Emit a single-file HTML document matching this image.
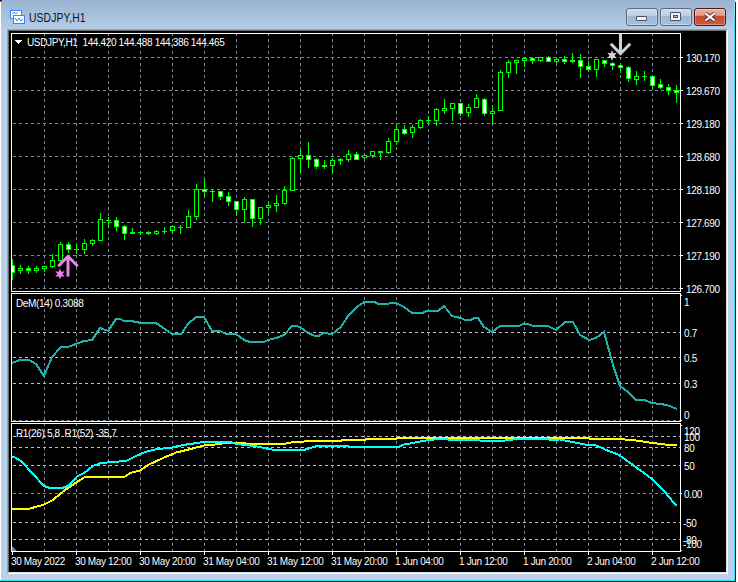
<!DOCTYPE html>
<html><head><meta charset="utf-8">
<style>
html,body{margin:0;padding:0;}
body{width:738px;height:582px;position:relative;overflow:hidden;background:#fff;font-family:"Liberation Sans",sans-serif;}
.frame{position:absolute;left:1px;top:0;width:734px;height:580px;background:#b9d1ea;}
.title{position:absolute;left:1px;top:0;width:734px;height:29px;background:linear-gradient(#99b3d0,#b5cde6);}
.cyanr{position:absolute;left:734px;top:2px;width:1px;height:578px;background:#40d8f8;}
.darkr{position:absolute;left:735px;top:2px;width:1px;height:580px;background:#1a1a1a;}
.cyanb{position:absolute;left:0;top:580px;width:735px;height:1px;background:#40d8f8;}
.darkb{position:absolute;left:0;top:581px;width:736px;height:1px;background:#1a1a1a;}
.sunk{position:absolute;left:7px;top:29px;width:721px;height:545px;box-sizing:border-box;border-top:1px solid #a0a0a0;border-left:1px solid #a0a0a0;border-right:1px solid #fff;border-bottom:1px solid #fff;}
.sunk2{position:absolute;left:8px;top:30px;width:719px;height:543px;box-sizing:border-box;border-top:1px solid #696969;border-left:1px solid #696969;border-right:1px solid #e3e3e3;border-bottom:1px solid #e3e3e3;}
svg{position:absolute;left:0;top:0;}
.t{position:absolute;white-space:nowrap;line-height:12px;}
.ttl{position:absolute;left:29px;top:9px;font-size:12px;color:#0c1428;line-height:18px;letter-spacing:0.15px;transform:scaleX(0.86);transform-origin:0 0;}
.btn{position:absolute;top:8px;height:18px;box-sizing:border-box;border:1px solid #5a6880;border-radius:3px;background:linear-gradient(#cadbef 0%,#bed1e8 40%,#9db7d4 44%,#a8c1dc 100%);box-shadow:inset 0 0 0 1px rgba(255,255,255,0.3);}
.cls{border-color:#4a1420;background:linear-gradient(#ecb2a2 0%,#e09a88 40%,#c24a30 44%,#cc5c40 100%);}
</style></head><body>
<div class="frame"></div>
<div class="title"></div>
<div class="cyanr"></div><div class="darkr"></div>
<div class="cyanb"></div><div class="darkb"></div>
<div style="position:absolute;left:0;top:0;width:2px;height:1px;background:#222"></div><div style="position:absolute;left:0;top:1px;width:1px;height:1px;background:#555"></div>
<div style="position:absolute;left:734px;top:2px;width:1px;height:24px;background:linear-gradient(#a0e6f6,#40d8f8)"></div>
<div class="sunk"></div><div class="sunk2"></div>
<svg width="738" height="582" viewBox="0 0 738 582">
<defs>
<clipPath id="mainclip"><rect x="12" y="34" width="668" height="257"/></clipPath>
<clipPath id="p2clip"><rect x="12" y="294" width="668" height="127"/></clipPath>
<clipPath id="p3clip"><rect x="12" y="424" width="668" height="127"/></clipPath>
</defs>
<rect x="9" y="31" width="717" height="541" fill="#000"/>
<g shape-rendering="crispEdges">
<line x1="44.5" y1="34" x2="44.5" y2="291" stroke="#778899" stroke-dasharray="3 3" stroke-dashoffset="1"/>
<line x1="76.5" y1="34" x2="76.5" y2="291" stroke="#778899" stroke-dasharray="3 3" stroke-dashoffset="1"/>
<line x1="108.5" y1="34" x2="108.5" y2="291" stroke="#778899" stroke-dasharray="3 3" stroke-dashoffset="1"/>
<line x1="140.5" y1="34" x2="140.5" y2="291" stroke="#778899" stroke-dasharray="3 3" stroke-dashoffset="1"/>
<line x1="172.5" y1="34" x2="172.5" y2="291" stroke="#778899" stroke-dasharray="3 3" stroke-dashoffset="1"/>
<line x1="204.5" y1="34" x2="204.5" y2="291" stroke="#778899" stroke-dasharray="3 3" stroke-dashoffset="1"/>
<line x1="236.5" y1="34" x2="236.5" y2="291" stroke="#778899" stroke-dasharray="3 3" stroke-dashoffset="1"/>
<line x1="268.5" y1="34" x2="268.5" y2="291" stroke="#778899" stroke-dasharray="3 3" stroke-dashoffset="1"/>
<line x1="300.5" y1="34" x2="300.5" y2="291" stroke="#778899" stroke-dasharray="3 3" stroke-dashoffset="1"/>
<line x1="332.5" y1="34" x2="332.5" y2="291" stroke="#778899" stroke-dasharray="3 3" stroke-dashoffset="1"/>
<line x1="364.5" y1="34" x2="364.5" y2="291" stroke="#778899" stroke-dasharray="3 3" stroke-dashoffset="1"/>
<line x1="396.5" y1="34" x2="396.5" y2="291" stroke="#778899" stroke-dasharray="3 3" stroke-dashoffset="1"/>
<line x1="428.5" y1="34" x2="428.5" y2="291" stroke="#778899" stroke-dasharray="3 3" stroke-dashoffset="1"/>
<line x1="460.5" y1="34" x2="460.5" y2="291" stroke="#778899" stroke-dasharray="3 3" stroke-dashoffset="1"/>
<line x1="492.5" y1="34" x2="492.5" y2="291" stroke="#778899" stroke-dasharray="3 3" stroke-dashoffset="1"/>
<line x1="524.5" y1="34" x2="524.5" y2="291" stroke="#778899" stroke-dasharray="3 3" stroke-dashoffset="1"/>
<line x1="556.5" y1="34" x2="556.5" y2="291" stroke="#778899" stroke-dasharray="3 3" stroke-dashoffset="1"/>
<line x1="588.5" y1="34" x2="588.5" y2="291" stroke="#778899" stroke-dasharray="3 3" stroke-dashoffset="1"/>
<line x1="620.5" y1="34" x2="620.5" y2="291" stroke="#778899" stroke-dasharray="3 3" stroke-dashoffset="1"/>
<line x1="652.5" y1="34" x2="652.5" y2="291" stroke="#778899" stroke-dasharray="3 3" stroke-dashoffset="1"/>
<line x1="44.5" y1="294" x2="44.5" y2="421" stroke="#778899" stroke-dasharray="3 3" stroke-dashoffset="3"/>
<line x1="76.5" y1="294" x2="76.5" y2="421" stroke="#778899" stroke-dasharray="3 3" stroke-dashoffset="3"/>
<line x1="108.5" y1="294" x2="108.5" y2="421" stroke="#778899" stroke-dasharray="3 3" stroke-dashoffset="3"/>
<line x1="140.5" y1="294" x2="140.5" y2="421" stroke="#778899" stroke-dasharray="3 3" stroke-dashoffset="3"/>
<line x1="172.5" y1="294" x2="172.5" y2="421" stroke="#778899" stroke-dasharray="3 3" stroke-dashoffset="3"/>
<line x1="204.5" y1="294" x2="204.5" y2="421" stroke="#778899" stroke-dasharray="3 3" stroke-dashoffset="3"/>
<line x1="236.5" y1="294" x2="236.5" y2="421" stroke="#778899" stroke-dasharray="3 3" stroke-dashoffset="3"/>
<line x1="268.5" y1="294" x2="268.5" y2="421" stroke="#778899" stroke-dasharray="3 3" stroke-dashoffset="3"/>
<line x1="300.5" y1="294" x2="300.5" y2="421" stroke="#778899" stroke-dasharray="3 3" stroke-dashoffset="3"/>
<line x1="332.5" y1="294" x2="332.5" y2="421" stroke="#778899" stroke-dasharray="3 3" stroke-dashoffset="3"/>
<line x1="364.5" y1="294" x2="364.5" y2="421" stroke="#778899" stroke-dasharray="3 3" stroke-dashoffset="3"/>
<line x1="396.5" y1="294" x2="396.5" y2="421" stroke="#778899" stroke-dasharray="3 3" stroke-dashoffset="3"/>
<line x1="428.5" y1="294" x2="428.5" y2="421" stroke="#778899" stroke-dasharray="3 3" stroke-dashoffset="3"/>
<line x1="460.5" y1="294" x2="460.5" y2="421" stroke="#778899" stroke-dasharray="3 3" stroke-dashoffset="3"/>
<line x1="492.5" y1="294" x2="492.5" y2="421" stroke="#778899" stroke-dasharray="3 3" stroke-dashoffset="3"/>
<line x1="524.5" y1="294" x2="524.5" y2="421" stroke="#778899" stroke-dasharray="3 3" stroke-dashoffset="3"/>
<line x1="556.5" y1="294" x2="556.5" y2="421" stroke="#778899" stroke-dasharray="3 3" stroke-dashoffset="3"/>
<line x1="588.5" y1="294" x2="588.5" y2="421" stroke="#778899" stroke-dasharray="3 3" stroke-dashoffset="3"/>
<line x1="620.5" y1="294" x2="620.5" y2="421" stroke="#778899" stroke-dasharray="3 3" stroke-dashoffset="3"/>
<line x1="652.5" y1="294" x2="652.5" y2="421" stroke="#778899" stroke-dasharray="3 3" stroke-dashoffset="3"/>
<line x1="44.5" y1="424" x2="44.5" y2="551" stroke="#778899" stroke-dasharray="3 3" stroke-dashoffset="1"/>
<line x1="76.5" y1="424" x2="76.5" y2="551" stroke="#778899" stroke-dasharray="3 3" stroke-dashoffset="1"/>
<line x1="108.5" y1="424" x2="108.5" y2="551" stroke="#778899" stroke-dasharray="3 3" stroke-dashoffset="1"/>
<line x1="140.5" y1="424" x2="140.5" y2="551" stroke="#778899" stroke-dasharray="3 3" stroke-dashoffset="1"/>
<line x1="172.5" y1="424" x2="172.5" y2="551" stroke="#778899" stroke-dasharray="3 3" stroke-dashoffset="1"/>
<line x1="204.5" y1="424" x2="204.5" y2="551" stroke="#778899" stroke-dasharray="3 3" stroke-dashoffset="1"/>
<line x1="236.5" y1="424" x2="236.5" y2="551" stroke="#778899" stroke-dasharray="3 3" stroke-dashoffset="1"/>
<line x1="268.5" y1="424" x2="268.5" y2="551" stroke="#778899" stroke-dasharray="3 3" stroke-dashoffset="1"/>
<line x1="300.5" y1="424" x2="300.5" y2="551" stroke="#778899" stroke-dasharray="3 3" stroke-dashoffset="1"/>
<line x1="332.5" y1="424" x2="332.5" y2="551" stroke="#778899" stroke-dasharray="3 3" stroke-dashoffset="1"/>
<line x1="364.5" y1="424" x2="364.5" y2="551" stroke="#778899" stroke-dasharray="3 3" stroke-dashoffset="1"/>
<line x1="396.5" y1="424" x2="396.5" y2="551" stroke="#778899" stroke-dasharray="3 3" stroke-dashoffset="1"/>
<line x1="428.5" y1="424" x2="428.5" y2="551" stroke="#778899" stroke-dasharray="3 3" stroke-dashoffset="1"/>
<line x1="460.5" y1="424" x2="460.5" y2="551" stroke="#778899" stroke-dasharray="3 3" stroke-dashoffset="1"/>
<line x1="492.5" y1="424" x2="492.5" y2="551" stroke="#778899" stroke-dasharray="3 3" stroke-dashoffset="1"/>
<line x1="524.5" y1="424" x2="524.5" y2="551" stroke="#778899" stroke-dasharray="3 3" stroke-dashoffset="1"/>
<line x1="556.5" y1="424" x2="556.5" y2="551" stroke="#778899" stroke-dasharray="3 3" stroke-dashoffset="1"/>
<line x1="588.5" y1="424" x2="588.5" y2="551" stroke="#778899" stroke-dasharray="3 3" stroke-dashoffset="1"/>
<line x1="620.5" y1="424" x2="620.5" y2="551" stroke="#778899" stroke-dasharray="3 3" stroke-dashoffset="1"/>
<line x1="652.5" y1="424" x2="652.5" y2="551" stroke="#778899" stroke-dasharray="3 3" stroke-dashoffset="1"/>
<line x1="12" y1="57.5" x2="680" y2="57.5" stroke="#778899" stroke-dasharray="3 3" stroke-dashoffset="5"/>
<line x1="12" y1="90.5" x2="680" y2="90.5" stroke="#778899" stroke-dasharray="3 3" stroke-dashoffset="5"/>
<line x1="12" y1="123.5" x2="680" y2="123.5" stroke="#778899" stroke-dasharray="3 3" stroke-dashoffset="5"/>
<line x1="12" y1="156.5" x2="680" y2="156.5" stroke="#778899" stroke-dasharray="3 3" stroke-dashoffset="5"/>
<line x1="12" y1="189.5" x2="680" y2="189.5" stroke="#778899" stroke-dasharray="3 3" stroke-dashoffset="5"/>
<line x1="12" y1="222.5" x2="680" y2="222.5" stroke="#778899" stroke-dasharray="3 3" stroke-dashoffset="5"/>
<line x1="12" y1="255.5" x2="680" y2="255.5" stroke="#778899" stroke-dasharray="3 3" stroke-dashoffset="5"/>
<line x1="12" y1="288.5" x2="680" y2="288.5" stroke="#778899" stroke-dasharray="3 3" stroke-dashoffset="5"/>
<line x1="12" y1="420.5" x2="680" y2="420.5" stroke="#778899" stroke-dasharray="3 3" stroke-dashoffset="5"/>
<line x1="12" y1="332.5" x2="680" y2="332.5" stroke="#c0c0c0" stroke-dasharray="3 3" stroke-dashoffset="5"/>
<line x1="12" y1="357.5" x2="680" y2="357.5" stroke="#c0c0c0" stroke-dasharray="3 3" stroke-dashoffset="5"/>
<line x1="12" y1="383.5" x2="680" y2="383.5" stroke="#c0c0c0" stroke-dasharray="3 3" stroke-dashoffset="5"/>
<line x1="12" y1="493.5" x2="680" y2="493.5" stroke="#778899" stroke-dasharray="3 3" stroke-dashoffset="5"/>
<line x1="12" y1="436.5" x2="680" y2="436.5" stroke="#c0c0c0" stroke-dasharray="3 3" stroke-dashoffset="5"/>
<line x1="12" y1="447.5" x2="680" y2="447.5" stroke="#c0c0c0" stroke-dasharray="3 3" stroke-dashoffset="5"/>
<line x1="12" y1="465.5" x2="680" y2="465.5" stroke="#c0c0c0" stroke-dasharray="3 3" stroke-dashoffset="5"/>
<line x1="12" y1="522.5" x2="680" y2="522.5" stroke="#c0c0c0" stroke-dasharray="3 3" stroke-dashoffset="5"/>
<line x1="12" y1="539.5" x2="680" y2="539.5" stroke="#c0c0c0" stroke-dasharray="3 3" stroke-dashoffset="5"/>
</g>
<g shape-rendering="crispEdges" clip-path="url(#mainclip)">
<rect x="12" y="259" width="1" height="21" fill="#00ff00"/>
<rect x="10" y="265" width="5" height="8" fill="#00ff00"/>
<rect x="11" y="266" width="3" height="6" fill="#fff"/>
<rect x="20" y="265" width="1" height="9" fill="#00ff00"/>
<rect x="18" y="268" width="5" height="3" fill="#00ff00"/>
<rect x="19" y="269" width="3" height="1" fill="#000"/>
<rect x="28" y="266" width="1" height="8" fill="#00ff00"/>
<rect x="26" y="268" width="5" height="3" fill="#00ff00"/>
<rect x="27" y="269" width="3" height="1" fill="#fff"/>
<rect x="36" y="266" width="1" height="7" fill="#00ff00"/>
<rect x="34" y="268" width="5" height="3" fill="#00ff00"/>
<rect x="35" y="269" width="3" height="1" fill="#000"/>
<rect x="44" y="266" width="1" height="6" fill="#00ff00"/>
<rect x="42" y="266" width="5" height="3" fill="#00ff00"/>
<rect x="43" y="267" width="3" height="1" fill="#000"/>
<rect x="52" y="254" width="1" height="14" fill="#00ff00"/>
<rect x="50" y="260" width="5" height="7" fill="#00ff00"/>
<rect x="51" y="261" width="3" height="5" fill="#000"/>
<rect x="60" y="242" width="1" height="21" fill="#00ff00"/>
<rect x="58" y="244" width="5" height="17" fill="#00ff00"/>
<rect x="59" y="245" width="3" height="15" fill="#000"/>
<rect x="68" y="242" width="1" height="11" fill="#00ff00"/>
<rect x="66" y="244" width="5" height="6" fill="#00ff00"/>
<rect x="67" y="245" width="3" height="4" fill="#fff"/>
<rect x="76" y="244" width="1" height="10" fill="#00ff00"/>
<rect x="74" y="249" width="5" height="1" fill="#00ff00"/>
<rect x="84" y="239" width="1" height="15" fill="#00ff00"/>
<rect x="82" y="243" width="5" height="7" fill="#00ff00"/>
<rect x="83" y="244" width="3" height="5" fill="#000"/>
<rect x="92" y="239" width="1" height="7" fill="#00ff00"/>
<rect x="90" y="240" width="5" height="4" fill="#00ff00"/>
<rect x="91" y="241" width="3" height="2" fill="#000"/>
<rect x="100" y="213" width="1" height="28" fill="#00ff00"/>
<rect x="98" y="219" width="5" height="22" fill="#00ff00"/>
<rect x="99" y="220" width="3" height="20" fill="#000"/>
<rect x="108" y="217" width="1" height="11" fill="#00ff00"/>
<rect x="106" y="220" width="5" height="1" fill="#00ff00"/>
<rect x="116" y="217" width="1" height="14" fill="#00ff00"/>
<rect x="114" y="220" width="5" height="7" fill="#00ff00"/>
<rect x="115" y="221" width="3" height="5" fill="#fff"/>
<rect x="124" y="225" width="1" height="15" fill="#00ff00"/>
<rect x="122" y="226" width="5" height="8" fill="#00ff00"/>
<rect x="123" y="227" width="3" height="6" fill="#fff"/>
<rect x="132" y="228" width="1" height="6" fill="#00ff00"/>
<rect x="130" y="232" width="5" height="2" fill="#00ff00"/>
<rect x="140" y="231" width="1" height="4" fill="#00ff00"/>
<rect x="138" y="232" width="5" height="1" fill="#00ff00"/>
<rect x="148" y="231" width="1" height="4" fill="#00ff00"/>
<rect x="146" y="232" width="5" height="2" fill="#00ff00"/>
<rect x="156" y="230" width="1" height="5" fill="#00ff00"/>
<rect x="154" y="231" width="5" height="3" fill="#00ff00"/>
<rect x="155" y="232" width="3" height="1" fill="#000"/>
<rect x="164" y="227" width="1" height="7" fill="#00ff00"/>
<rect x="162" y="231" width="5" height="1" fill="#00ff00"/>
<rect x="172" y="225" width="1" height="9" fill="#00ff00"/>
<rect x="170" y="226" width="5" height="5" fill="#00ff00"/>
<rect x="171" y="227" width="3" height="3" fill="#000"/>
<rect x="180" y="225" width="1" height="9" fill="#00ff00"/>
<rect x="178" y="227" width="5" height="1" fill="#00ff00"/>
<rect x="188" y="210" width="1" height="18" fill="#00ff00"/>
<rect x="186" y="216" width="5" height="12" fill="#00ff00"/>
<rect x="187" y="217" width="3" height="10" fill="#000"/>
<rect x="196" y="184" width="1" height="36" fill="#00ff00"/>
<rect x="194" y="189" width="5" height="28" fill="#00ff00"/>
<rect x="195" y="190" width="3" height="26" fill="#000"/>
<rect x="204" y="179" width="1" height="19" fill="#00ff00"/>
<rect x="202" y="189" width="5" height="3" fill="#00ff00"/>
<rect x="203" y="190" width="3" height="1" fill="#fff"/>
<rect x="212" y="189" width="1" height="13" fill="#00ff00"/>
<rect x="210" y="191" width="5" height="1" fill="#00ff00"/>
<rect x="220" y="191" width="1" height="9" fill="#00ff00"/>
<rect x="218" y="191" width="5" height="6" fill="#00ff00"/>
<rect x="219" y="192" width="3" height="4" fill="#fff"/>
<rect x="228" y="192" width="1" height="14" fill="#00ff00"/>
<rect x="226" y="196" width="5" height="6" fill="#00ff00"/>
<rect x="227" y="197" width="3" height="4" fill="#fff"/>
<rect x="236" y="201" width="1" height="15" fill="#00ff00"/>
<rect x="234" y="201" width="5" height="9" fill="#00ff00"/>
<rect x="235" y="202" width="3" height="7" fill="#fff"/>
<rect x="244" y="197" width="1" height="26" fill="#00ff00"/>
<rect x="242" y="199" width="5" height="11" fill="#00ff00"/>
<rect x="243" y="200" width="3" height="9" fill="#000"/>
<rect x="252" y="199" width="1" height="28" fill="#00ff00"/>
<rect x="250" y="199" width="5" height="20" fill="#00ff00"/>
<rect x="251" y="200" width="3" height="18" fill="#fff"/>
<rect x="260" y="207" width="1" height="18" fill="#00ff00"/>
<rect x="258" y="207" width="5" height="12" fill="#00ff00"/>
<rect x="259" y="208" width="3" height="10" fill="#000"/>
<rect x="268" y="202" width="1" height="11" fill="#00ff00"/>
<rect x="266" y="205" width="5" height="3" fill="#00ff00"/>
<rect x="267" y="206" width="3" height="1" fill="#000"/>
<rect x="276" y="195" width="1" height="17" fill="#00ff00"/>
<rect x="274" y="203" width="5" height="3" fill="#00ff00"/>
<rect x="275" y="204" width="3" height="1" fill="#000"/>
<rect x="284" y="186" width="1" height="19" fill="#00ff00"/>
<rect x="282" y="190" width="5" height="14" fill="#00ff00"/>
<rect x="283" y="191" width="3" height="12" fill="#000"/>
<rect x="292" y="157" width="1" height="34" fill="#00ff00"/>
<rect x="290" y="158" width="5" height="33" fill="#00ff00"/>
<rect x="291" y="159" width="3" height="31" fill="#000"/>
<rect x="300" y="149" width="1" height="24" fill="#00ff00"/>
<rect x="298" y="155" width="5" height="4" fill="#00ff00"/>
<rect x="299" y="156" width="3" height="2" fill="#000"/>
<rect x="308" y="142" width="1" height="26" fill="#00ff00"/>
<rect x="306" y="155" width="5" height="5" fill="#00ff00"/>
<rect x="307" y="156" width="3" height="3" fill="#fff"/>
<rect x="316" y="158" width="1" height="11" fill="#00ff00"/>
<rect x="314" y="159" width="5" height="8" fill="#00ff00"/>
<rect x="315" y="160" width="3" height="6" fill="#fff"/>
<rect x="324" y="160" width="1" height="9" fill="#00ff00"/>
<rect x="322" y="165" width="5" height="2" fill="#00ff00"/>
<rect x="332" y="158" width="1" height="16" fill="#00ff00"/>
<rect x="330" y="160" width="5" height="6" fill="#00ff00"/>
<rect x="331" y="161" width="3" height="4" fill="#000"/>
<rect x="340" y="158" width="1" height="7" fill="#00ff00"/>
<rect x="338" y="159" width="5" height="2" fill="#00ff00"/>
<rect x="348" y="150" width="1" height="12" fill="#00ff00"/>
<rect x="346" y="154" width="5" height="6" fill="#00ff00"/>
<rect x="347" y="155" width="3" height="4" fill="#000"/>
<rect x="356" y="152" width="1" height="8" fill="#00ff00"/>
<rect x="354" y="154" width="5" height="6" fill="#00ff00"/>
<rect x="355" y="155" width="3" height="4" fill="#fff"/>
<rect x="364" y="155" width="1" height="4" fill="#00ff00"/>
<rect x="362" y="155" width="5" height="3" fill="#00ff00"/>
<rect x="363" y="156" width="3" height="1" fill="#000"/>
<rect x="372" y="151" width="1" height="7" fill="#00ff00"/>
<rect x="370" y="151" width="5" height="5" fill="#00ff00"/>
<rect x="371" y="152" width="3" height="3" fill="#000"/>
<rect x="380" y="151" width="1" height="9" fill="#00ff00"/>
<rect x="378" y="151" width="5" height="2" fill="#00ff00"/>
<rect x="388" y="138" width="1" height="16" fill="#00ff00"/>
<rect x="386" y="141" width="5" height="12" fill="#00ff00"/>
<rect x="387" y="142" width="3" height="10" fill="#000"/>
<rect x="396" y="123" width="1" height="22" fill="#00ff00"/>
<rect x="394" y="129" width="5" height="13" fill="#00ff00"/>
<rect x="395" y="130" width="3" height="11" fill="#000"/>
<rect x="404" y="125" width="1" height="10" fill="#00ff00"/>
<rect x="402" y="129" width="5" height="5" fill="#00ff00"/>
<rect x="403" y="130" width="3" height="3" fill="#fff"/>
<rect x="412" y="125" width="1" height="13" fill="#00ff00"/>
<rect x="410" y="127" width="5" height="6" fill="#00ff00"/>
<rect x="411" y="128" width="3" height="4" fill="#000"/>
<rect x="420" y="119" width="1" height="10" fill="#00ff00"/>
<rect x="418" y="120" width="5" height="8" fill="#00ff00"/>
<rect x="419" y="121" width="3" height="6" fill="#000"/>
<rect x="428" y="116" width="1" height="8" fill="#00ff00"/>
<rect x="426" y="120" width="5" height="1" fill="#00ff00"/>
<rect x="436" y="108" width="1" height="18" fill="#00ff00"/>
<rect x="434" y="109" width="5" height="12" fill="#00ff00"/>
<rect x="435" y="110" width="3" height="10" fill="#000"/>
<rect x="444" y="99" width="1" height="15" fill="#00ff00"/>
<rect x="442" y="108" width="5" height="3" fill="#00ff00"/>
<rect x="443" y="109" width="3" height="1" fill="#000"/>
<rect x="452" y="103" width="1" height="18" fill="#00ff00"/>
<rect x="450" y="103" width="5" height="6" fill="#00ff00"/>
<rect x="451" y="104" width="3" height="4" fill="#000"/>
<rect x="460" y="103" width="1" height="13" fill="#00ff00"/>
<rect x="458" y="103" width="5" height="11" fill="#00ff00"/>
<rect x="459" y="104" width="3" height="9" fill="#fff"/>
<rect x="468" y="104" width="1" height="13" fill="#00ff00"/>
<rect x="466" y="107" width="5" height="6" fill="#00ff00"/>
<rect x="467" y="108" width="3" height="4" fill="#000"/>
<rect x="476" y="94" width="1" height="14" fill="#00ff00"/>
<rect x="474" y="98" width="5" height="10" fill="#00ff00"/>
<rect x="475" y="99" width="3" height="8" fill="#000"/>
<rect x="484" y="98" width="1" height="18" fill="#00ff00"/>
<rect x="482" y="99" width="5" height="15" fill="#00ff00"/>
<rect x="483" y="100" width="3" height="13" fill="#fff"/>
<rect x="492" y="105" width="1" height="19" fill="#00ff00"/>
<rect x="490" y="111" width="5" height="3" fill="#00ff00"/>
<rect x="491" y="112" width="3" height="1" fill="#000"/>
<rect x="500" y="70" width="1" height="41" fill="#00ff00"/>
<rect x="498" y="72" width="5" height="39" fill="#00ff00"/>
<rect x="499" y="73" width="3" height="37" fill="#000"/>
<rect x="508" y="60" width="1" height="18" fill="#00ff00"/>
<rect x="506" y="62" width="5" height="11" fill="#00ff00"/>
<rect x="507" y="63" width="3" height="9" fill="#000"/>
<rect x="516" y="60" width="1" height="14" fill="#00ff00"/>
<rect x="514" y="60" width="5" height="3" fill="#00ff00"/>
<rect x="515" y="61" width="3" height="1" fill="#000"/>
<rect x="524" y="57" width="1" height="10" fill="#00ff00"/>
<rect x="522" y="58" width="5" height="3" fill="#00ff00"/>
<rect x="523" y="59" width="3" height="1" fill="#000"/>
<rect x="532" y="57" width="1" height="7" fill="#00ff00"/>
<rect x="530" y="58" width="5" height="3" fill="#00ff00"/>
<rect x="531" y="59" width="3" height="1" fill="#fff"/>
<rect x="540" y="57" width="1" height="5" fill="#00ff00"/>
<rect x="538" y="57" width="5" height="4" fill="#00ff00"/>
<rect x="539" y="58" width="3" height="2" fill="#000"/>
<rect x="548" y="56" width="1" height="6" fill="#00ff00"/>
<rect x="546" y="57" width="5" height="5" fill="#00ff00"/>
<rect x="547" y="58" width="3" height="3" fill="#fff"/>
<rect x="556" y="58" width="1" height="6" fill="#00ff00"/>
<rect x="554" y="59" width="5" height="3" fill="#00ff00"/>
<rect x="555" y="60" width="3" height="1" fill="#000"/>
<rect x="564" y="56" width="1" height="8" fill="#00ff00"/>
<rect x="562" y="59" width="5" height="3" fill="#00ff00"/>
<rect x="563" y="60" width="3" height="1" fill="#fff"/>
<rect x="572" y="53" width="1" height="10" fill="#00ff00"/>
<rect x="570" y="60" width="5" height="2" fill="#00ff00"/>
<rect x="580" y="54" width="1" height="24" fill="#00ff00"/>
<rect x="578" y="60" width="5" height="7" fill="#00ff00"/>
<rect x="579" y="61" width="3" height="5" fill="#fff"/>
<rect x="588" y="61" width="1" height="11" fill="#00ff00"/>
<rect x="586" y="66" width="5" height="4" fill="#00ff00"/>
<rect x="587" y="67" width="3" height="2" fill="#fff"/>
<rect x="596" y="59" width="1" height="18" fill="#00ff00"/>
<rect x="594" y="59" width="5" height="11" fill="#00ff00"/>
<rect x="595" y="60" width="3" height="9" fill="#000"/>
<rect x="604" y="60" width="1" height="7" fill="#00ff00"/>
<rect x="602" y="60" width="5" height="4" fill="#00ff00"/>
<rect x="603" y="61" width="3" height="2" fill="#fff"/>
<rect x="612" y="62" width="1" height="8" fill="#00ff00"/>
<rect x="610" y="63" width="5" height="3" fill="#00ff00"/>
<rect x="611" y="64" width="3" height="1" fill="#fff"/>
<rect x="620" y="63" width="1" height="10" fill="#00ff00"/>
<rect x="618" y="65" width="5" height="3" fill="#00ff00"/>
<rect x="619" y="66" width="3" height="1" fill="#fff"/>
<rect x="628" y="66" width="1" height="16" fill="#00ff00"/>
<rect x="626" y="67" width="5" height="12" fill="#00ff00"/>
<rect x="627" y="68" width="3" height="10" fill="#fff"/>
<rect x="636" y="71" width="1" height="14" fill="#00ff00"/>
<rect x="634" y="76" width="5" height="4" fill="#00ff00"/>
<rect x="635" y="77" width="3" height="2" fill="#000"/>
<rect x="644" y="71" width="1" height="10" fill="#00ff00"/>
<rect x="642" y="76" width="5" height="1" fill="#00ff00"/>
<rect x="652" y="75" width="1" height="15" fill="#00ff00"/>
<rect x="650" y="76" width="5" height="10" fill="#00ff00"/>
<rect x="651" y="77" width="3" height="8" fill="#fff"/>
<rect x="660" y="79" width="1" height="10" fill="#00ff00"/>
<rect x="658" y="84" width="5" height="4" fill="#00ff00"/>
<rect x="659" y="85" width="3" height="2" fill="#fff"/>
<rect x="668" y="84" width="1" height="11" fill="#00ff00"/>
<rect x="666" y="87" width="5" height="4" fill="#00ff00"/>
<rect x="667" y="88" width="3" height="2" fill="#fff"/>
<rect x="676" y="85" width="1" height="18" fill="#00ff00"/>
<rect x="674" y="90" width="5" height="3" fill="#00ff00"/>
<rect x="675" y="91" width="3" height="1" fill="#fff"/>
</g>
<g clip-path="url(#p2clip)"><polyline points="12,363 20,360 29,360 36,364 44,376 52,357 61,347 68,347 76,344 84,341 92,340 100,328 108,331 116,319 120,319 124,321 131,321 141,323 156,323 162,327 172,334 181,334 188,324 196,317 204,317 212,331 220,331 226,334 236,334 244,340 250,342 264,342 268,340 276,338 284,335 292,326 296,326 300,327 308,333 315,336 319,336 323,333 332,334 341,327 348,316 357,307 364,302 375,302 378,304 388,304 390,303 396,303 404,307 412,313 423,313 426,311 438,311 444,306 452,316 456,317 461,318 465,320 471,320 474,318 478,318 484,327 492,332 500,326 519,326 523,324 528,324 533,326 548,326 556,330 565,322 573,322 580,335 589,340 596,338 604,332 613,365 620,386 628,392 636,400 644,400 652,403 660,404 667,405 677,409" fill="none" stroke="#20b2aa" stroke-width="2" stroke-linejoin="miter" shape-rendering="crispEdges"/></g>
<g clip-path="url(#p3clip)"><polyline points="12,509 28,509 44,504.6 52,500.6 65,490 77,482 85,477 124,477 130.5,473 140,470.5 148,465 163,458 176,452.6 189,449.4 205,445.3 213,444.8 221,443.7 229,442.6 245,442.6 246,443.7 285,443.7 293.5,442 309,441.3 320,441 341,441 342,440 365,440 365.4,439 396,439 397,437.7 589,437.9 590,439 619,439 635,440.3 652,442.9 668,444.9 677,445" fill="none" stroke="#ffff00" stroke-width="2" stroke-linejoin="miter" shape-rendering="crispEdges"/><polyline points="12,457 14,457 21,461 44,486 50,488 62,488 68,486 77,476.5 84,473 93,466 101,463 113,462 126,461 134,457 145,452 157,449 170,448 183,445 197,443 206,441.6 228,441.6 237,444 245,445 254,446 265,448 268,449 276,450 304,450 312,447.4 317,446 348,446 349,447 398,447 404,444.5 413,443 421,441.3 429,440 436,439.3 476,440 484,441 501,441 509,440 517,439 541,439 550,439.6 560,439.5 577,442.9 588,445 596,445.4 607.5,450.5 618.5,454.7 633,465 651.5,478.5 663.4,490.3 676.5,506" fill="none" stroke="#00ffff" stroke-width="2" stroke-linejoin="miter" shape-rendering="crispEdges"/></g>
<g shape-rendering="crispEdges" fill="none" stroke="#fff">
<rect x="11.5" y="33.5" width="669" height="258"/>
<rect x="11.5" y="293.5" width="669" height="128"/>
<rect x="11.5" y="423.5" width="669" height="128"/>
</g>
<path d="M68,276.5 V257 M58.3,266.3 L68,256.3 L77.7,266.3" fill="none" stroke="#ee82ee" stroke-width="3"/>
<polygon points="60.00,268.50 58.76,271.86 55.24,271.25 57.52,274.00 55.24,276.75 58.76,276.14 60.00,279.50 61.24,276.14 64.76,276.75 62.48,274.00 64.76,271.25 61.24,271.86" fill="#ee82ee"/>
<path d="M620.5,34 V53 M610.8,43.7 L620.5,53.7 L630.2,43.7" fill="none" stroke="#d3d3d3" stroke-width="3"/>
<polygon points="612.00,50.00 610.76,53.36 607.24,52.75 609.52,55.50 607.24,58.25 610.76,57.64 612.00,61.00 613.24,57.64 616.76,58.25 614.48,55.50 616.76,52.75 613.24,53.36" fill="#d3d3d3"/>
<g shape-rendering="crispEdges" fill="#fff">
<rect x="681" y="57" width="2" height="1"/>
<rect x="681" y="90" width="2" height="1"/>
<rect x="681" y="123" width="2" height="1"/>
<rect x="681" y="156" width="2" height="1"/>
<rect x="681" y="189" width="2" height="1"/>
<rect x="681" y="222" width="2" height="1"/>
<rect x="681" y="255" width="2" height="1"/>
<rect x="681" y="288" width="2" height="1"/>
<rect x="681" y="295" width="1" height="1"/>
<rect x="681" y="420" width="1" height="1"/>
<rect x="681" y="425" width="1" height="1"/>
<rect x="681" y="493" width="1" height="1"/>
<rect x="681" y="550" width="1" height="1"/>
<rect x="12" y="552" width="1" height="3"/>
<rect x="76" y="552" width="1" height="3"/>
<rect x="140" y="552" width="1" height="3"/>
<rect x="204" y="552" width="1" height="3"/>
<rect x="268" y="552" width="1" height="3"/>
<rect x="332" y="552" width="1" height="3"/>
<rect x="396" y="552" width="1" height="3"/>
<rect x="460" y="552" width="1" height="3"/>
<rect x="524" y="552" width="1" height="3"/>
<rect x="588" y="552" width="1" height="3"/>
<rect x="652" y="552" width="1" height="3"/>
</g>
<polygon points="12,546 12,551 17,551" fill="#778899"/>
<path d="M15,40h7v1h-1v1h-1v1h-1v1h-1v-1h-1v-1h-1v-1h-1z" fill="#fff" shape-rendering="crispEdges"/>
<g transform="translate(10,10)">
<rect x="0.5" y="0.5" width="11" height="8" fill="#fff" stroke="#3d7fff"/>
<rect x="3.5" y="5.5" width="11" height="8" fill="#fff" stroke="#3d7fff"/>
<path d="M2,4 L4,2 L6,4 L8,2" fill="none" stroke="#3d7fff" stroke-width="1"/>
<path d="M5,8 L7,11 L9,8 L11,11 L13,9" fill="none" stroke="#3d7fff" stroke-width="1"/>
</g>
</svg>
<div class="ttl">USDJPY,H1</div>
<div class="btn" style="left:626px;width:32px;"><div style="position:absolute;left:9px;top:7px;width:11px;height:5px;box-sizing:border-box;border:1px solid #4a5266;border-radius:1px;background:#f4f4f4;"></div></div>
<div class="btn" style="left:660px;width:32px;"><div style="position:absolute;left:9px;top:3px;width:11px;height:9px;box-sizing:border-box;border:1px solid #4a5266;border-radius:1px;background:#f4f4f4;"><div style="position:absolute;left:2px;top:2px;width:5px;height:3px;box-sizing:border-box;border:1px solid #4a5266;background:#9fb9d6;"></div></div></div>
<div class="btn cls" style="left:694px;width:32px;"><svg width="30" height="16" style="position:absolute;left:0;top:0"><path d="M10.5,4.5 L19.5,11.5 M19.5,4.5 L10.5,11.5" stroke="#4a3040" stroke-width="4"/><path d="M10.5,4.5 L19.5,11.5 M19.5,4.5 L10.5,11.5" stroke="#fff" stroke-width="2.2"/></svg></div>
<div class="t" style="left:686px;top:53px;font-size:10px;color:#fff;letter-spacing:-0.35px;">130.170</div>
<div class="t" style="left:686px;top:86px;font-size:10px;color:#fff;letter-spacing:-0.35px;">129.670</div>
<div class="t" style="left:686px;top:119px;font-size:10px;color:#fff;letter-spacing:-0.35px;">129.180</div>
<div class="t" style="left:686px;top:152px;font-size:10px;color:#fff;letter-spacing:-0.35px;">128.680</div>
<div class="t" style="left:686px;top:185px;font-size:10px;color:#fff;letter-spacing:-0.35px;">128.180</div>
<div class="t" style="left:686px;top:218px;font-size:10px;color:#fff;letter-spacing:-0.35px;">127.690</div>
<div class="t" style="left:686px;top:251px;font-size:10px;color:#fff;letter-spacing:-0.35px;">127.190</div>
<div class="t" style="left:686px;top:284px;font-size:10px;color:#fff;letter-spacing:-0.35px;">126.700</div>
<div class="t" style="left:684px;top:297px;font-size:10px;color:#fff;letter-spacing:-0.35px;">1</div>
<div class="t" style="left:684px;top:328px;font-size:10px;color:#fff;letter-spacing:-0.35px;">0.7</div>
<div class="t" style="left:684px;top:353px;font-size:10px;color:#fff;letter-spacing:-0.35px;">0.5</div>
<div class="t" style="left:684px;top:379px;font-size:10px;color:#fff;letter-spacing:-0.35px;">0.3</div>
<div class="t" style="left:684px;top:410px;font-size:10px;color:#fff;letter-spacing:-0.35px;">0</div>
<div class="t" style="left:684px;top:426px;font-size:10px;color:#fff;letter-spacing:-0.35px;">120</div>
<div class="t" style="left:684px;top:432px;font-size:10px;color:#fff;letter-spacing:-0.35px;">100</div>
<div class="t" style="left:684px;top:443px;font-size:10px;color:#fff;letter-spacing:-0.35px;">80</div>
<div class="t" style="left:684px;top:461px;font-size:10px;color:#fff;letter-spacing:-0.35px;">50</div>
<div class="t" style="left:684px;top:489px;font-size:10px;color:#fff;letter-spacing:-0.35px;">0.00</div>
<div class="t" style="left:683px;top:518px;font-size:10px;color:#fff;letter-spacing:-0.35px;">-50</div>
<div class="t" style="left:683px;top:535px;font-size:10px;color:#fff;letter-spacing:-0.35px;">-80</div>
<div class="t" style="left:683px;top:539px;font-size:10px;color:#fff;letter-spacing:-0.35px;">-100</div>
<div class="t" style="left:11px;top:556px;font-size:10px;color:#fff;letter-spacing:-0.35px;">30 May 2022</div>
<div class="t" style="left:75px;top:556px;font-size:10px;color:#fff;letter-spacing:-0.35px;">30 May 12:00</div>
<div class="t" style="left:139px;top:556px;font-size:10px;color:#fff;letter-spacing:-0.35px;">30 May 20:00</div>
<div class="t" style="left:203px;top:556px;font-size:10px;color:#fff;letter-spacing:-0.35px;">31 May 04:00</div>
<div class="t" style="left:267px;top:556px;font-size:10px;color:#fff;letter-spacing:-0.35px;">31 May 12:00</div>
<div class="t" style="left:331px;top:556px;font-size:10px;color:#fff;letter-spacing:-0.35px;">31 May 20:00</div>
<div class="t" style="left:395px;top:556px;font-size:10px;color:#fff;letter-spacing:-0.35px;">1 Jun 04:00</div>
<div class="t" style="left:459px;top:556px;font-size:10px;color:#fff;letter-spacing:-0.35px;">1 Jun 12:00</div>
<div class="t" style="left:523px;top:556px;font-size:10px;color:#fff;letter-spacing:-0.35px;">1 Jun 20:00</div>
<div class="t" style="left:587px;top:556px;font-size:10px;color:#fff;letter-spacing:-0.35px;">2 Jun 04:00</div>
<div class="t" style="left:651px;top:556px;font-size:10px;color:#fff;letter-spacing:-0.35px;">2 Jun 12:00</div>
<div class="t" style="left:27px;top:37px;font-size:10px;color:#fff;letter-spacing:-0.35px;">USDJPY,H1&nbsp;&nbsp;144.420 144.488 144.386 144.465</div>
<div class="t" style="left:16px;top:298px;font-size:10px;color:#fff;letter-spacing:-0.35px;">DeM(14) 0.3088</div>
<div class="t" style="left:16px;top:428px;font-size:10px;color:#fff;letter-spacing:-0.35px;">R1(26) 5,8&nbsp;&nbsp;R1(52) -35,7</div>
</body></html>
